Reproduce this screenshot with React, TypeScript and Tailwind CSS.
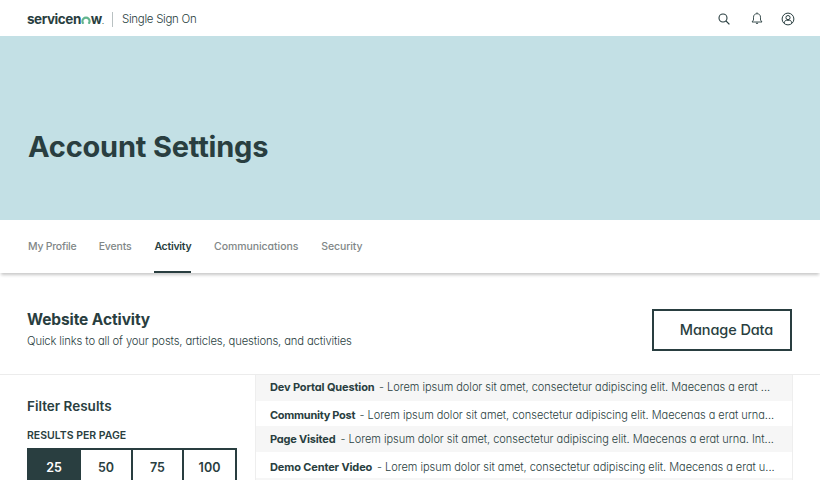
const tabs = [
  { label: "My Profile", box: "w-[48px] tracking-[-0.25px]" },
  { label: "Events", box: "w-[33px] tracking-[-0.15px]" },
  { label: "Activity", box: "w-[37px] tracking-[-0.25px]", active: true },
  { label: "Communications", box: "w-[84.5px] tracking-[-0.06px]" },
  { label: "Security", box: "w-[41px] tracking-[-0.1px]" },
];

const rows = [
  {
    title: "Dev Portal Question",
    body: "Lorem ipsum dolor sit amet, consectetur adipiscing elit. Maecenas a erat ...",
    row: "h-[26px] bg-[#f6f6f6] pt-[4px]",
    heading: "w-[109px] tracking-[-0.14px]",
  },
  {
    title: "Community Post",
    body: "Lorem ipsum dolor sit amet, consectetur adipiscing elit. Maecenas a erat urna...",
    row: "h-[25px] pt-[6px]",
    heading: "w-[89.5px] tracking-[-0.28px]",
  },
  {
    title: "Page Visited",
    body: "Lorem ipsum dolor sit amet, consectetur adipiscing elit. Maecenas a erat urna. Int...",
    row: "h-[26px] bg-[#f6f6f6] pt-[5px]",
    heading: "w-[70.5px] tracking-[-0.2px]",
  },
  {
    title: "Demo Center Video",
    body: "Lorem ipsum dolor sit amet, consectetur adipiscing elit. Maecenas a erat u...",
    row: "h-[26px] pt-[7px]",
    heading: "w-[107px] tracking-[-0.13px]",
  },
];

const pageSizes = [
  { value: "25", cell: "w-[54px] bg-[#293e40] text-white" },
  { value: "50", cell: "w-[52px] border-r-2" },
  { value: "75", cell: "w-[51px] border-r-2" },
  { value: "100", cell: "w-[51px]" },
];

function Logo() {
  return (
    <div className="mt-[4px] flex w-[76px] items-baseline text-[13.5px] leading-[20px] font-bold tracking-[-0.45px]" aria-label="servicenow">
      <span>servicen</span>
      <svg className="h-[8px] w-[10px] shrink-0" viewBox="0 0 10 8" fill="none">
        <path d="M2.500 7.800A3.600 3.600 0 1 1 7.500 7.800" stroke="#62b58f" strokeWidth="2.200" />
      </svg>
      <span>w</span>
      <span className="text-[6px]">.</span>
    </div>
  );
}

function Header() {
  return (
    <header className="flex h-[36px] items-center pr-[25px] pl-[27px]">
      <Logo />
      <div className="mt-[2px] ml-[9px] h-[15px] w-px bg-[#b9c1c2]" />
      <span className="mt-[4px] ml-[9px] text-[11.5px] font-light tracking-[-0.3px]">Single Sign On</span>
      <div className="ml-auto flex items-center">
        <svg className="mt-[2px] h-[12px] w-[12px]" viewBox="0 0 12 12" fill="none" stroke="#293e40">
          <circle cx="5" cy="5" r="4" strokeWidth="1.1" />
          <path d="M7.900 7.900L11.400 11.400" strokeWidth="1.3" />
        </svg>
        <svg className="ml-[21px] h-[13px] w-[12px]" viewBox="0 0 12 13" fill="none" stroke="#293e40" strokeWidth="0.9">
          <path d="M1 10h10L9.500 8V5.200C9.500 3 8 1.700 6 1.700S2.500 3 2.500 5.200V8L1 10Z" strokeLinejoin="round" />
          <path d="M6 .4v1.200" />
          <path d="M4.700 10.700C5 12.300 7 12.300 7.300 10.700Z" fill="#293e40" stroke="none" />
        </svg>
        <svg className="mt-[2px] ml-[18px] h-[14px] w-[14px]" viewBox="0 0 14 14" fill="none" stroke="#293e40">
          <circle cx="7" cy="7" r="5.900" />
          <circle cx="7" cy="5.600" r="2.100" />
          <path d="M3.500 11.300V10.500C3.500 9 4.400 8.300 5.600 8.300H8.400C9.600 8.300 10.500 9 10.500 10.500V11.300" />
        </svg>
      </div>
    </header>
  );
}

export default function App() {
  return (
    <div className="h-[480px] w-[820px] overflow-hidden bg-white font-['Inter',sans-serif] whitespace-nowrap text-[#293e40] [font-feature-settings:'cv11']">
      <Header />
      <section className="h-[184px] bg-[#c3e0e5] pt-[89px] pl-[28px]">
        <h1 className="text-[29px] leading-[44px] font-bold tracking-[-0.2px]">Account Settings</h1>
      </section>
      <nav className="flex h-[53px] gap-[22.7px] pl-[28px] shadow-[0_3px_3px_-1px_rgba(0,0,0,0.22)]">
        {tabs.map((tab) => (
          <a
            key={tab.label}
            className={`${tab.box} text-[10.5px] leading-[54px] ${
              tab.active ? "h-[53px] border-b-2 border-[#293e40] font-semibold" : "font-medium text-[#818787]"
            }`}
          >
            {tab.label}
          </a>
        ))}
      </nav>
      <section className="flex h-[102px] justify-between border-b border-[#ececec] pt-[36px] pr-[28px] pl-[27px]">
        <div>
          <h2 className="mt-px text-[15.5px] leading-[20px] font-bold tracking-[-0.1px]">Website Activity</h2>
          <p className="mt-[2px] text-[11.25px] leading-[18px] font-light tracking-[-0.14px]">
            Quick links to all of your posts, articles, questions, and activities
          </p>
        </div>
        <button className="h-[42px] w-[140px] border-2 border-[#293e40] pl-[9px] text-[14.5px] font-medium tracking-[-0.1px]">
          Manage Data
        </button>
      </section>
      <main className="flex">
        <aside className="w-[255px] shrink-0 pt-[21px] pl-[27px]">
          <h3 className="text-[13.5px] leading-[20px] font-semibold">Filter Results</h3>
          <p className="mt-[12px] text-[10.5px] leading-[16px] font-semibold">RESULTS PER PAGE</p>
          <div className="mt-[4px] flex h-[40px] w-[210px] border-2 border-l-0 border-[#293e40]">
            {pageSizes.map((size) => (
              <span
                key={size.value}
                className={`${size.cell} border-[#293e40] text-center text-[12.5px] leading-[36px] font-semibold`}
              >
                {size.value}
              </span>
            ))}
          </div>
        </aside>
        <div className="h-[110px] w-[538px] border-x border-[#eeeeee]">
          {rows.map((r) => (
            <div key={r.title} className={`flex pl-[14px] text-[11px] leading-[17px] ${r.row}`}>
              <span className={`shrink-0 font-bold ${r.heading}`}>{r.title}</span>
              <span className="font-light tracking-[-0.03px]">- {r.body}</span>
            </div>
          ))}
          <div className="h-[10px] bg-[#f6f6f6]" />
        </div>
      </main>
    </div>
  );
}
